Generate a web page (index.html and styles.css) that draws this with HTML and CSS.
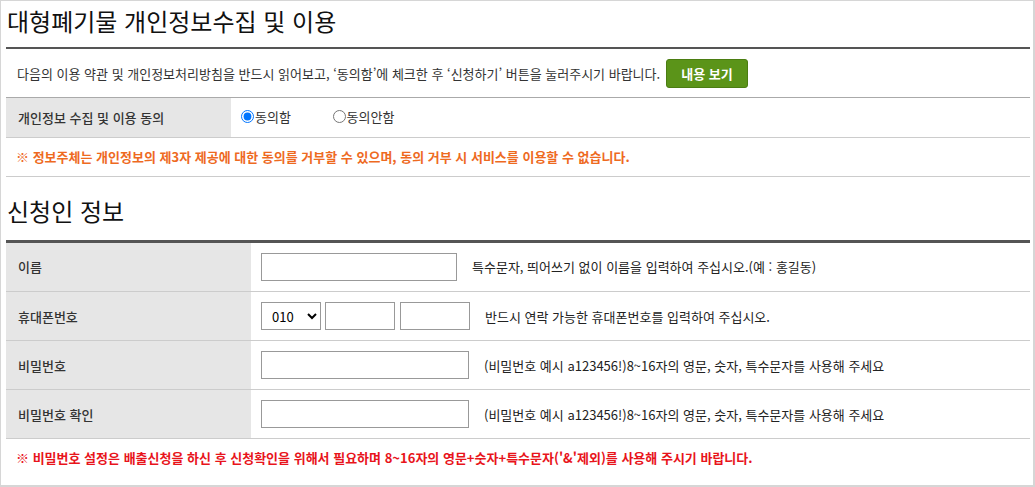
FILE: index.html
```html
<!DOCTYPE html>
<html lang="ko">
  <head>
    <meta charset="UTF-8" />
    <meta name="viewport" content="width=device-width, initial-scale=1.0" />
    <title>대형폐기물 배출신청</title>
    <link rel="stylesheet" href="styles.css">
  </head>
  <body>
    <div class="frame">
      <h2 class="sec-title">대형폐기물 개인정보수집 및 이용</h2>

      <!-- 약관 안내 -->
      <div class="notice">
        <span>다음의 이용 약관 및 개인정보처리방침을 반드시 읽어보고, ‘동의함’에 체크한 후 ‘신청하기’ 버튼을 눌러주시기 바랍니다.</span>
        <button type="button" class="btn-view">내용 보기</button>
      </div>

      <table class="form-table agree-table">
        <tr>
          <th>개인정보 수집 및 이용 동의</th>
          <td>
            <label class="radio first"><input type="radio" name="agree" checked />동의함</label>
            <label class="radio"><input type="radio" name="agree" />동의안함</label>
          </td>
        </tr>
      </table>
      <p class="warn orange">※ 정보주체는 개인정보의 제3자 제공에 대한 동의를 거부할 수 있으며, 동의 거부 시 서비스를 이용할 수 없습니다.</p>

      <h2 class="sec-title second">신청인 정보</h2>

      <table class="form-table info-table">
        <tr>
          <th>이름</th>
          <td>
            <div class="field">
              <input type="text" class="inp name" />
              <span class="help">특수문자, 띄어쓰기 없이 이름을 입력하여 주십시오.(예 : 홍길동)</span>
            </div>
          </td>
        </tr>
        <tr>
          <th>휴대폰번호</th>
          <td>
            <div class="field">
              <select class="inp phone-first">
                <option>010</option>
                <option>011</option>
                <option>016</option>
                <option>017</option>
              </select>
              <input type="text" class="inp phone" />
              <input type="text" class="inp phone" />
              <span class="help wide">반드시 연락 가능한 휴대폰번호를 입력하여 주십시오.</span>
            </div>
          </td>
        </tr>
        <tr>
          <th>비밀번호</th>
          <td>
            <div class="field">
              <input type="password" class="inp pw" />
              <span class="help">(비밀번호 예시 a123456!)8~16자의 영문, 숫자, 특수문자를 사용해 주세요</span>
            </div>
          </td>
        </tr>
        <tr>
          <th>비밀번호 확인</th>
          <td>
            <div class="field">
              <input type="password" class="inp pw" />
              <span class="help">(비밀번호 예시 a123456!)8~16자의 영문, 숫자, 특수문자를 사용해 주세요</span>
            </div>
          </td>
        </tr>
      </table>
      <p class="warn red">※ 비밀번호 설정은 배출신청을 하신 후 신청확인을 위해서 필요하며 8~16자의 영문+숫자+특수문자('&amp;'제외)를 사용해 주시기 바랍니다.</p>
    </div>
  </body>
</html>
```

FILE: styles.css
```css
* {
  box-sizing: border-box;
}
html,
body {
  margin: 0;
  background: #fff;
}
body {
  font-family: "Noto Sans CJK KR", "Noto Sans", sans-serif;
  font-size: 13px;
  color: #333;
}
.frame {
  width: 1035px;
  height: 487px;
  border: 1px solid #d6d6d6;
  border-right-width: 2px;
  border-bottom-width: 2px;
  padding: 0 3px 0 5px;
  overflow: hidden;
}
.sec-title {
  margin: 0;
  padding: 2px 0 8px 1px;
  font-size: 24px;
  font-weight: 400;
  line-height: 36px;
  color: #111;
  border-bottom: 2px solid #555;
}
.sec-title.second {
  padding-top: 16px;
  padding-bottom: 11px;
  border-bottom-width: 3px;
}
.notice {
  display: flex;
  align-items: center;
  gap: 6px;
  height: 49px;
  padding-left: 11px;
  border-bottom: 1px solid #aaa;
}
.btn-view {
  height: 29px;
  padding: 0 14px;
  font-family: inherit;
  font-size: 13px;
  font-weight: 700;
  color: #fff;
  background-color: #5b9419;
  border: 1px solid #4b7d12;
  border-radius: 3px;
  cursor: pointer;
}
.form-table {
  width: 100%;
  border-collapse: collapse;
}
.form-table th {
  text-align: left;
  font-weight: 500;
  background-color: #e6e6e6;
  padding: 0 0 0 12px;
  border-bottom: 1px solid #ccc;
}
.form-table td {
  padding: 0 0 0 10px;
  border-bottom: 1px solid #ccc;
}
.agree-table th {
  width: 225px;
  height: 39px;
}
.radio {
  display: inline-flex;
  align-items: center;
}
.radio.first {
  margin-right: 38px;
}
.radio input {
  margin: 0 1px 0 0;
  width: 13px;
  height: 13px;
}
.warn {
  margin: 0;
  height: 39px;
  line-height: 38px;
  padding-left: 10px;
  font-weight: 700;
  border-bottom: 1px solid #ccc;
}
.warn.orange {
  color: #ee6a1f;
}
.warn.red {
  color: #e8141b;
  border-bottom: none;
}
.info-table th {
  width: 245px;
  height: 49px;
}
.field {
  display: flex;
  align-items: center;
}
.inp {
  height: 28px;
  border: 1px solid #999;
  border-radius: 0;
  font-family: inherit;
  font-size: 13px;
  background: #fff;
  padding: 0 6px;
  margin: 0;
}
.inp.name {
  width: 196px;
}
.inp.pw {
  width: 208px;
}
.phone-first {
  width: 60px;
  margin-right: 4px;
}
.inp.phone {
  width: 70px;
  margin-right: 5px;
}
.inp.phone:last-of-type {
  margin-right: 0;
}
.help {
  margin-left: 15px;
  color: #222;
}
```
